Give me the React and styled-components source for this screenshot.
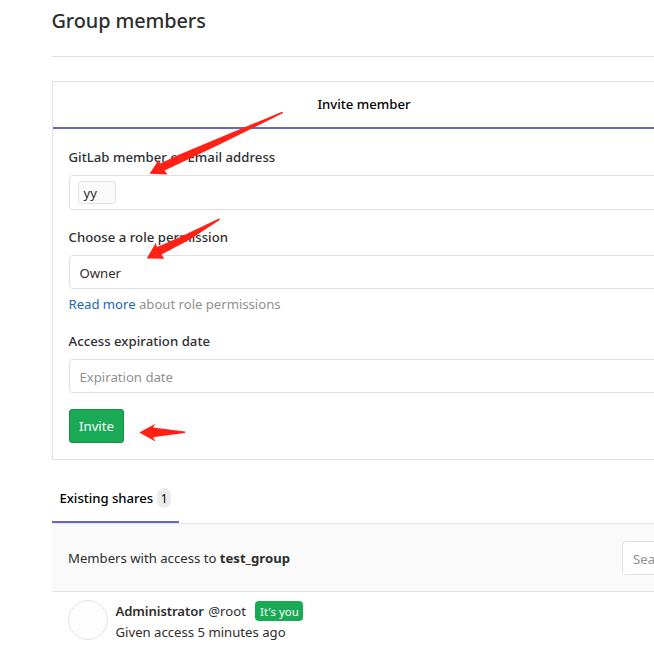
import React from 'react';
import styled, { createGlobalStyle } from 'styled-components';

const GlobalStyle = createGlobalStyle`
  * { box-sizing: border-box; }
  html, body { margin: 0; padding: 0; background: #fff; overflow: hidden; }
  body {
    font-family: 'Noto Sans', 'Open Sans', sans-serif;
    font-size: 13.15px;
    line-height: 20px;
    color: #2e2e2e;
  }
`;

const Page = styled.main`
  position: relative;
  width: 654px;
  height: 671px;
  padding-left: 52px;
  overflow: hidden;
  white-space: nowrap;
`;

const Content = styled.div`
  width: 624px;
`;

const Heading = styled.h1`
  margin: 0;
  height: 57px;
  padding-top: 7px;
  border-bottom: 1px solid #dfdfdf;
  font-size: 19.9px;
  font-weight: 500;
  line-height: 28px;
  letter-spacing: -0.1px;
  text-indent: -0.5px;
`;

const InvitePanel = styled.section`
  margin-top: 24px;
  height: 379px;
  border: 1px solid #e1e1e1;
`;

const InviteTab = styled.div`
  height: 47px;
  border-bottom: 2px solid #6666c4;
  color: #000;
  font-weight: 500;
  line-height: 44px;
  text-align: center;
`;

const Form = styled.form`
  display: flex;
  flex-direction: column;
  align-items: flex-start;
  padding: 18px 16px 0;
  text-indent: -0.5px;
`;

const Field = styled.div`
  width: 100%;
  margin-bottom: ${(p) => p.$gap}px;
`;

const Label = styled.label`
  display: block;
  height: 20px;
  margin-bottom: 8px;
  font-weight: 500;
  letter-spacing: 0.04px;
`;

const InputBox = styled.div`
  display: flex;
  align-items: center;
  height: ${(p) => p.$height || 34}px;
  padding: ${(p) => p.$padding || '2px 10px 0'};
  border: 1px solid #dfdfdf;
  border-radius: 4px;
  background: #fff;
  color: ${(p) => (p.$muted ? '#919191' : '#2e2e2e')};
`;

const Token = styled.span`
  width: 38px;
  height: 23px;
  padding-left: 5px;
  border: 1px solid #e3e3e3;
  border-radius: 3px;
  background: #fafafa;
  line-height: 22px;
`;

const Help = styled.p`
  margin: 5px 0 0;
  color: #919191;
  letter-spacing: -0.02px;
`;

const Link = styled.a`
  color: #1b69b6;
`;

const InviteButton = styled.button`
  width: 55px;
  height: 34px;
  padding: 0;
  border: 1px solid #168f48;
  border-radius: 3px;
  background: #1aaa55;
  color: #fff;
  font: inherit;
`;

const Tabs = styled.nav`
  display: flex;
  height: 64px;
  border-bottom: 1px solid #e5e5e5;
`;

const SharesTab = styled.div`
  display: flex;
  align-items: center;
  gap: 4px;
  width: 127px;
  height: 63px;
  padding: 15px 0 0 7.5px;
  border-bottom: 2px solid #6666c4;
  color: #000;
  font-weight: 500;
  letter-spacing: -0.04px;
`;

const Count = styled.span`
  width: 14px;
  height: 20px;
  border-radius: 8px;
  background: #ececec;
  font-size: 12px;
  font-weight: 400;
  line-height: 21px;
  text-align: center;
`;

const MembersBar = styled.div`
  display: flex;
  align-items: center;
  height: 68px;
  padding-left: 16px;
  border-bottom: 1px solid #e5e5e5;
  background: #fafafa;
`;

const SearchBox = styled(InputBox)`
  flex: none;
  width: 200px;
  margin-left: auto;
  margin-right: -146px;
`;

const Member = styled.article`
  display: flex;
  gap: 7.5px;
  padding: 8px 0 0 16px;
`;

const Avatar = styled.div`
  width: 40px;
  height: 40px;
  border: 1px solid #e5e5e5;
  border-radius: 50%;
  background: #fdfdfd;
`;

const MemberLine = styled.div`
  display: flex;
  align-items: center;
  height: 21px;
`;

const Name = styled.strong`
  margin-right: 4.5px;
  font-weight: 600;
  letter-spacing: -0.1px;
`;

const Badge = styled.span`
  width: 48px;
  height: 20px;
  margin-left: 9.5px;
  border-radius: 4px;
  background: #1aaa55;
  color: #fff;
  font-size: 11.4px;
  line-height: 21px;
  text-align: center;
`;

const Annotations = styled.svg`
  position: absolute;
  inset: 0;
  pointer-events: none;
  fill: #ff2116;
`;

export default function App() {
  return (
    <Page>
      <GlobalStyle />
      <Content>
        <Heading>Group members</Heading>
        <InvitePanel>
          <InviteTab>Invite member</InviteTab>
          <Form>
            <Field $gap={17}>
              <Label>GitLab member or Email address</Label>
              <InputBox $height={35} $padding="0 8px">
                <Token>yy</Token>
              </InputBox>
            </Field>
            <Field $gap={17}>
              <Label>Choose a role permission</Label>
              <InputBox>Owner</InputBox>
              <Help><Link>Read more</Link> about role permissions</Help>
            </Field>
            <Field $gap={16}>
              <Label>Access expiration date</Label>
              <InputBox $muted>Expiration date</InputBox>
            </Field>
            <InviteButton type="button">Invite</InviteButton>
          </Form>
        </InvitePanel>
        <Tabs>
          <SharesTab>Existing shares <Count>1</Count></SharesTab>
        </Tabs>
        <MembersBar>
          <span>Members with access to <strong>test_group</strong></span>
          <SearchBox $muted>Search</SearchBox>
        </MembersBar>
        <Member>
          <Avatar />
          <div>
            <MemberLine><Name>Administrator</Name><span>@root</span><Badge>It's you</Badge></MemberLine>
            <MemberLine>Given access 5 minutes ago</MemberLine>
          </div>
        </Member>
      </Content>
      <Annotations width="654" height="671" viewBox="0 0 654 671">
        <path d="M149.500 173.700 L158.500 160 L160.300 163.500 L180 154.300 L220 137.500 L282 111.800 L283.200 113 L220 144.200 L190 158.500 L164.500 170.500 L167.500 174.500 Z" />
        <path d="M146.700 258.500 L155.700 243 L157 247 L178 238 L219 218.500 L220 219.800 L190 239.500 L161.500 254.500 L164.300 258.700 Z" />
        <path d="M139.300 432.500 L155.500 423.700 L153 427.600 L185 431.500 L185 433 L153 437.300 L155.500 441.500 Z" />
      </Annotations>
    </Page>
  );
}
